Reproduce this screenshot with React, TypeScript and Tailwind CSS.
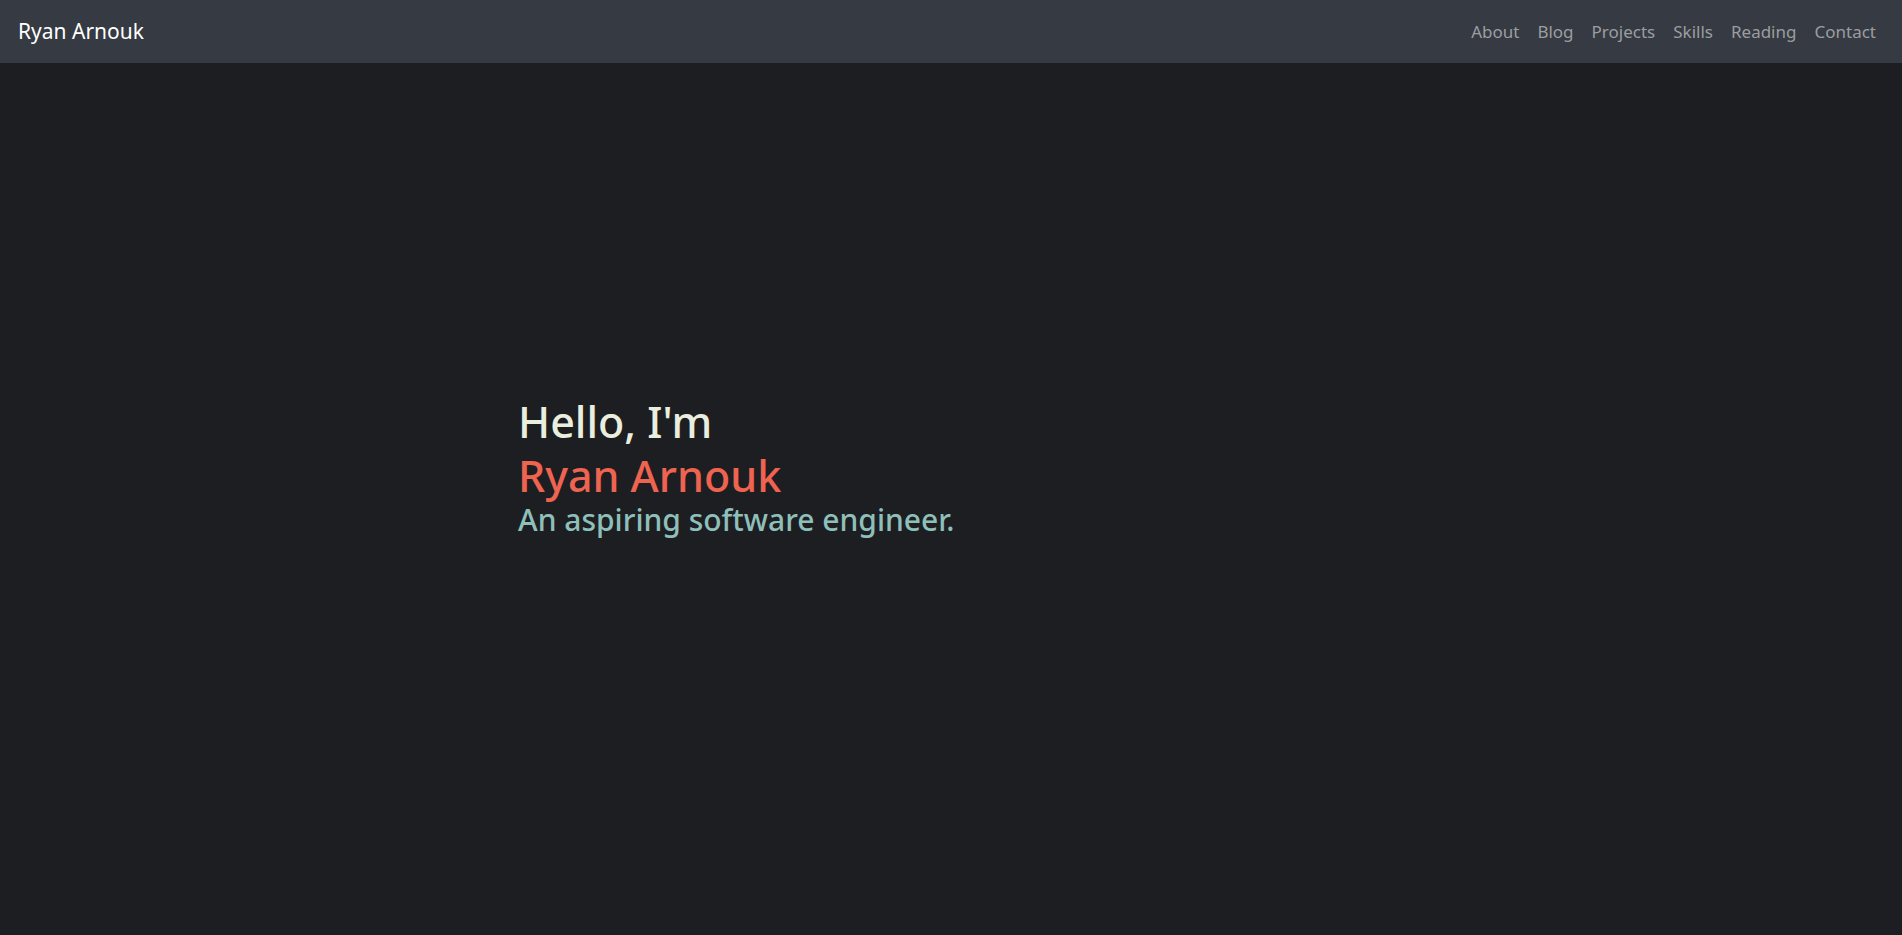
import React from "react";

export default function App() {
  const links = ["About", "Blog", "Projects", "Skills", "Reading", "Contact"];
  return (
    <div className="min-h-screen w-full bg-[#1d1e22]" style={{ fontFamily: '"Noto Sans", "Open Sans", sans-serif' }}>
      <nav className="h-[63px] bg-[#363a42] flex items-center justify-between pl-[18px] pr-[26px]">
        <span className="text-white text-[21px] leading-none">Ryan Arnouk</span>
        <ul className="flex items-center gap-[18px]">
          {links.map((l) => (
            <li key={l} className="text-[#9b9ea1] text-[17px] leading-none">{l}</li>
          ))}
        </ul>
      </nav>
      <main className="h-[872px] flex flex-col justify-start pt-[332px] pl-[518px]">
        <h1 className="text-[43px] font-medium leading-[54px] text-[#e9eedf]">Hello, I'm</h1>
        <h1 className="text-[43px] font-medium leading-[54px] text-[#ef6351]">Ryan Arnouk</h1>
        <h2 className="text-[30px] font-medium leading-[34px] text-[#8fbfb9]">An aspiring software engineer.</h2>
      </main>
    </div>
  );
}
